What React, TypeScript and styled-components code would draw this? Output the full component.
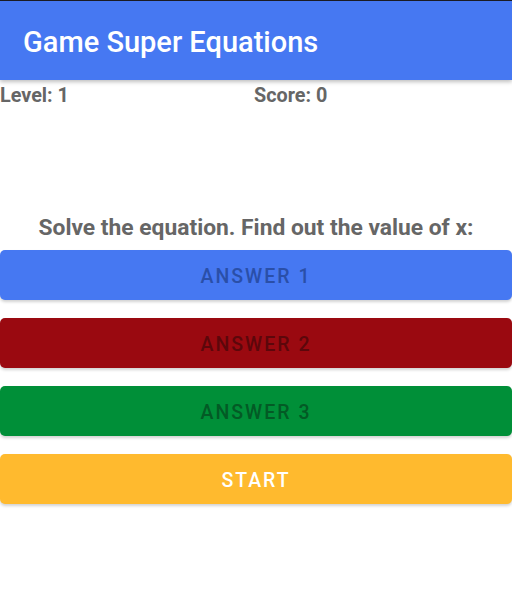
import styled, { createGlobalStyle } from 'styled-components';

const GlobalStyle = createGlobalStyle`
  html, body {
    margin: 0;
    padding: 0;
    background: #ffffff;
    font-family: Roboto, 'Liberation Sans', sans-serif;
  }
`;

const Screen = styled.div`
  width: 512px;
  min-height: 592px;
  border-top: 1px solid #1c1c24;
  box-sizing: border-box;
  display: flex;
  flex-direction: column;
`;

const AppBar = styled.header`
  height: 79px;
  background: #4678f2;
  color: #ffffff;
  display: flex;
  align-items: center;
  padding: 0 23px;
  box-shadow: 0 2px 4px rgba(0, 0, 0, 0.25);
  position: relative;
  z-index: 1;
`;

const Title = styled.h1`
  margin: 0;
  font-size: 29px;
  font-weight: 500;
  line-height: 1;
  padding-top: 3px;
`;

const Stats = styled.div`
  display: grid;
  grid-template-columns: 254px 1fr;
  padding-top: 4px;
  height: 24px;
`;

const Stat = styled.span`
  font-size: 19.8px;
  font-weight: 700;
  color: #666666;
  line-height: 24px;
`;

const Question = styled.p`
  margin: 106px 0 0;
  text-align: center;
  font-size: 22.8px;
  font-weight: 700;
  color: #666666;
  line-height: 28px;
`;

const Buttons = styled.div`
  display: flex;
  flex-direction: column;
  gap: 18px;
  margin-top: 8px;
`;

const Button = styled.button<{ $bg: string; $fg: string }>`
  height: 50px;
  border: none;
  border-radius: 5px;
  background: ${(p) => p.$bg};
  color: ${(p) => p.$fg};
  font-family: Roboto, 'Liberation Sans', sans-serif;
  font-size: 19.5px;
  font-weight: 500;
  letter-spacing: 2px;
  text-transform: uppercase;
  padding-top: 3px;
  box-shadow: 0 2px 3px rgba(0, 0, 0, 0.18);
  cursor: pointer;
`;

const answers = [
  { label: 'Answer 1', bg: '#4678f2', fg: '#2a4fa8' },
  { label: 'Answer 2', bg: '#9a0910', fg: '#5c070b' },
  { label: 'Answer 3', bg: '#008f38', fg: '#035a25' },
];

function App() {
  return (
    <Screen>
      <GlobalStyle />
      <AppBar>
        <Title>Game Super Equations</Title>
      </AppBar>
      <Stats>
        <Stat>Level: 1</Stat>
        <Stat>Score: 0</Stat>
      </Stats>
      <Question>Solve the equation. Find out the value of x:</Question>
      <Buttons>
        {answers.map((a) => (
          <Button key={a.label} $bg={a.bg} $fg={a.fg}>
            {a.label}
          </Button>
        ))}
        <Button $bg="#ffba2e" $fg="#ffffff">
          Start
        </Button>
      </Buttons>
    </Screen>
  );
}

export default App;
